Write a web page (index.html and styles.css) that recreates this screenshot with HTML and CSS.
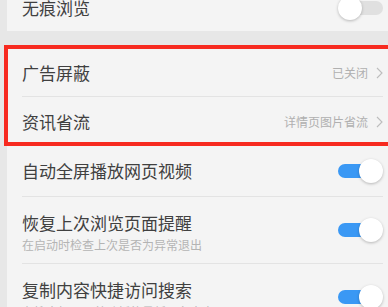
FILE: index.html
```html
<!DOCTYPE html>
<html lang="zh-CN">
<head>
  <meta charset="UTF-8">
  <meta name="viewport" content="width=device-width, initial-scale=1.0">
  <title>设置</title>
  <link rel="stylesheet" href="styles.css">
</head>
<body>
  <!-- Privacy card -->
  <div class="card card-top">
    <div class="row row-top">
      <span class="title">无痕浏览</span>
      <span class="switch off"><span class="knob"></span></span>
    </div>
  </div>

  <!-- Main settings card -->
  <div class="card card-main">
    <div class="highlight">
      <div class="row row-link">
        <span class="title">广告屏蔽</span>
        <span class="value">已关闭
          <svg class="chev" width="7" height="12" viewBox="0 0 7 12"><path d="M1 1 L6 6 L1 11" fill="none" stroke="#bdbdbd" stroke-width="1.1"/></svg>
        </span>
      </div>
      <div class="row row-link last">
        <span class="title">资讯省流</span>
        <span class="value">详情页图片省流
          <svg class="chev" width="7" height="12" viewBox="0 0 7 12"><path d="M1 1 L6 6 L1 11" fill="none" stroke="#bdbdbd" stroke-width="1.1"/></svg>
        </span>
      </div>
    </div>

    <div class="row row-single">
      <span class="title">自动全屏播放网页视频</span>
      <span class="switch"><span class="knob"></span></span>
    </div>
    <div class="row row-double">
      <div class="texts">
        <span class="title">恢复上次浏览页面提醒</span>
        <span class="sub">在启动时检查上次是否为异常退出</span>
      </div>
      <span class="switch"><span class="knob"></span></span>
    </div>
    <div class="row row-double">
      <div class="texts">
        <span class="title">复制内容快捷访问搜索</span>
        <span class="sub">在搜索框显示剪贴板的最新一条内容</span>
      </div>
      <span class="switch"><span class="knob"></span></span>
    </div>
  </div>
</body>
</html>
```

FILE: styles.css
```css
/* Global */
body {
  margin: 0;
  width: 388px;
  height: 307px;
  overflow: hidden;
  background-color: #e7e7e7;
  font-family: "Noto Sans CJK SC", "Noto Sans", sans-serif;
  color: #404040;
}

/* Cards */
.card {
  background-color: #f4f4f4;
  margin-left: 7px;
  padding-left: 15px;
  padding-right: 5px;
}

.card-top {
  margin-top: -15px;
  margin-bottom: 18px;
}

/* Red marker around the first two rows */
.highlight {
  margin-left: -14px;
  padding-left: 14px;
  outline: 4px solid #f72a20;
  margin-right: -10px;
  padding-right: 10px;
}

/* Rows */
.row {
  display: flex;
  align-items: center;
  justify-content: space-between;
  border-bottom: 1px solid #e3e3e3;
}

.row-top {
  height: 46px;
  border-bottom: none;
}

.row-link {
  height: 47px;
}

.row-link.last {
  height: 41px;
  border-bottom: none;
  padding-top: 4px;
}

.row-single {
  height: 50px;
  margin-top: 4px;
}

.row-double {
  height: 66px;
}

.title {
  font-size: 17px;
  line-height: 22px;
}

.texts {
  display: flex;
  flex-direction: column;
  align-self: flex-start;
  padding-top: 15px;
}

.sub {
  font-size: 12px;
  line-height: 17px;
  color: #b4b4b4;
  margin-top: 2px;
}

.value {
  display: flex;
  align-items: center;
  gap: 8px;
  font-size: 12px;
  color: #b0b0b0;
}

/* Switches */
.switch {
  position: relative;
  width: 45px;
  height: 24px;
  flex-shrink: 0;
}

.switch::before {
  content: "";
  position: absolute;
  left: 0;
  top: 5px;
  width: 40px;
  height: 14px;
  border-radius: 7px;
  background-color: #3a98f4;
}

.switch .knob {
  position: absolute;
  right: 0;
  top: 0;
  width: 24px;
  height: 24px;
  border-radius: 50%;
  background-color: #ffffff;
  box-shadow: 0 1px 3px rgba(0, 0, 0, 0.25);
}

.switch.off::before {
  left: 5px;
  background-color: #e0e0e0;
}

.switch.off .knob {
  right: auto;
  left: 0;
}
```
